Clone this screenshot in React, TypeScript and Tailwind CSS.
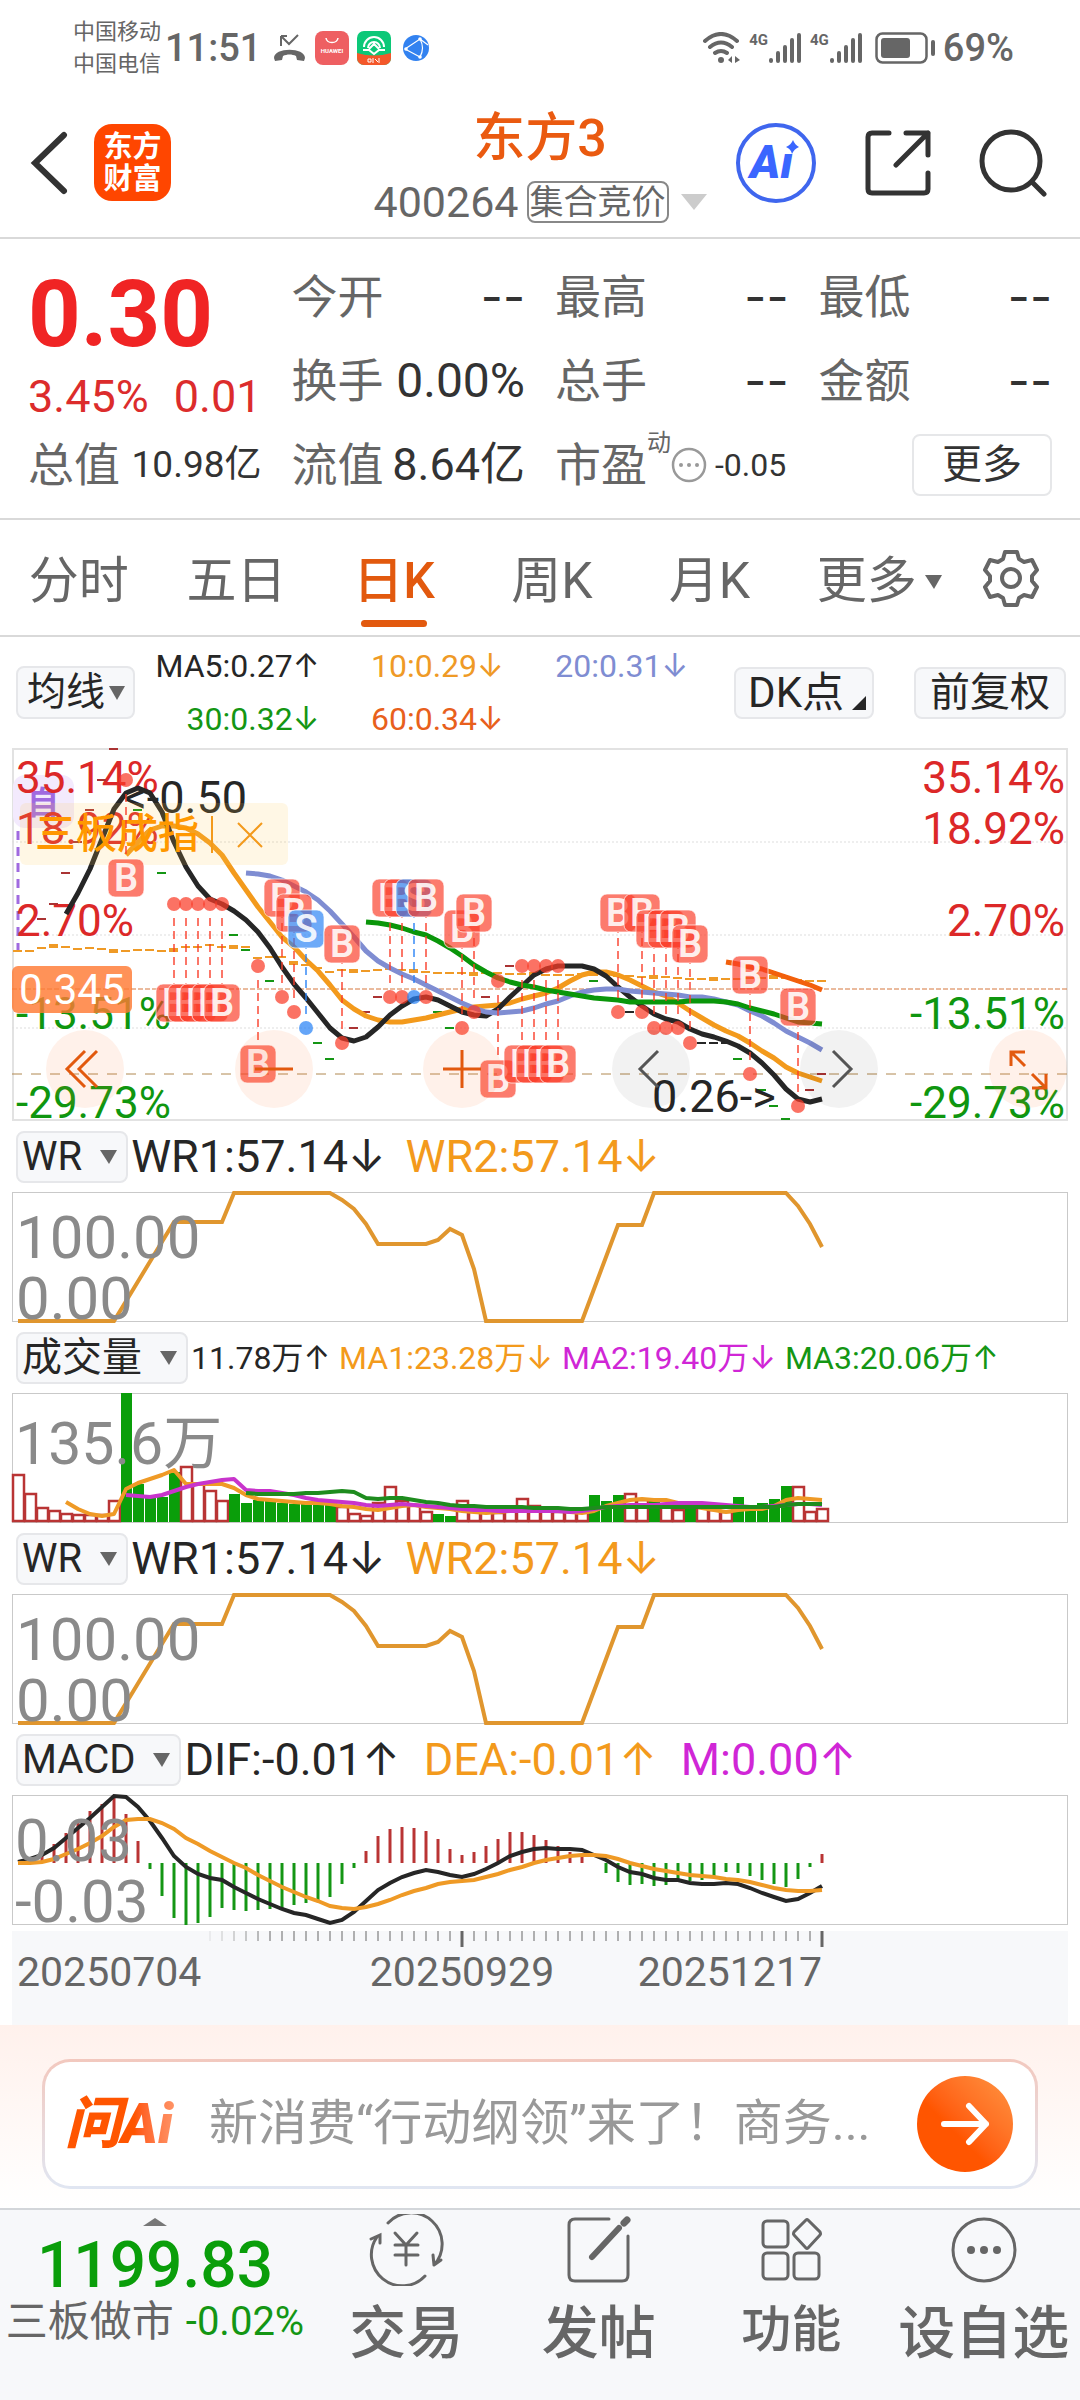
import type { ReactNode } from "react";

type Tone = "black" | "orange" | "purple" | "green";

const tones: Record<Tone, string> = {
  black: "text-[#262626]",
  orange: "text-[#f39a1c]",
  purple: "text-[#d026d6]",
  green: "text-[#149614]",
};

// Every trading day takes 12 units on the x axis
const dayX = (day: number) => 6 + day * 12;

const toPoints = (values: number[], start = 0) =>
  values.map((y, i) => `${dayX(start + i)},${y}`).join(" ");

// Moving averages of the price chart, one value per day from "start"
const averages = [
  {
    color: "#f39a1c",
    start: 9,
    values: [
      107, 94, 82, 78, 78, 80, 86, 95, 107, 125, 142, 159, 174, 189, 199, 212,
      223, 237, 252, 261, 268, 272, 274, 274, 272, 270, 267, 264, 261, 259, 258,
      257, 255, 251, 248, 245, 240, 233, 227, 224, 224, 227, 232, 238, 244, 248,
      255, 263, 270, 277, 283, 288, 295, 303, 310, 319, 325, 329, 333,
    ],
  },
  {
    color: "#262626",
    start: 4,
    values: [
      166, 145, 121, 91, 61, 45, 40, 45, 64, 94, 119, 138, 151, 156, 163, 172,
      184, 200, 219, 236, 250, 265, 280, 290, 293, 289, 279, 267, 258, 251, 249,
      252, 258, 264, 267, 268, 261, 249, 238, 227, 221, 218, 218, 218, 221, 228,
      239, 249, 258, 266, 271, 274, 281, 286, 289, 293, 298, 305, 315, 327, 341,
      351, 354, 351,
    ],
  },
  {
    color: "#7f8dd2",
    start: 19,
    values: [
      125, 126, 128, 132, 138, 144, 152, 163, 176, 189, 203, 213, 220, 226, 231,
      237, 243, 249, 255, 260, 264, 265, 264, 263, 260, 256, 253, 248, 244, 242,
      241, 241, 243, 244, 245, 246, 247, 249, 249, 251, 254, 257, 263, 268, 275,
      283, 289, 295, 302,
    ],
  },
  {
    color: "#0a960a",
    start: 29,
    values: [
      174, 175, 177, 180, 184, 187, 193, 200, 208, 217, 224, 230, 234, 237, 239,
      242, 244, 246, 248, 250, 251, 252, 254, 254, 254, 254, 254, 253, 253, 253,
      254, 256, 260, 263, 266, 270, 274, 275, 276,
    ],
  },
  {
    color: "#f2600c",
    start: 59,
    values: [214, 216, 219, 221, 225, 229, 233, 237, 242],
  },
];

// Overlay of the board index
const indexLine = [
  203, 203, 200, 198, 199, 201, 200, 201, 203, 203, 202, 202, 203, 202, 199,
  199, 197, 199, 199, 199, 210, 209, 209, 215, 217, 220, 224, 222, 223, 223,
  222, 221, 222, 223, 224, 225, 225, 225, 226, 225, 225, 226, 226, 226, 227,
  227, 227, 226, 226, 227, 228, 228, 229, 229, 229, 230, 231, 231, 231, 231,
  231, 230, 230, 229, 230, 232, 233, 233,
];

// Flat daily prices: [day, y, colour]
const prices: [number, number, string][] = [
  [2, 171, "#a33"], [3, 156, "#a33"], [4, 125, "#a33"], [5, 94, "#a33"],
  [6, 62, "#a33"], [7, 32, "#a33"], [8, 1, "#a33"], [28, 280, "#a33"],
  [29, 264, "#a33"], [30, 249, "#a33"], [39, 249, "#a33"], [41, 218, "#a33"],
  [66, 342, "#a33"], [67, 326, "#a33"], [10, 62, "#149614"],
  [12, 125, "#149614"], [18, 187, "#149614"], [19, 202, "#149614"],
  [21, 233, "#149614"], [25, 295, "#149614"], [26, 311, "#149614"],
  [35, 264, "#149614"], [36, 280, "#149614"], [48, 233, "#149614"],
  [60, 311, "#149614"], [62, 342, "#149614"], [63, 358, "#149614"],
  [64, 371, "#149614"], [51, 264, "#262626"], [57, 295, "#262626"],
  [58, 295, "#262626"], [59, 295, "#262626"],
];

// Buy and sell points: [day, price y, label y, letter]
const signals: [number, number, number, "B" | "S"][] = [
  [9, 32, 130, "B"],
  [13, 156, 255, "B"], [14, 156, 255, "B"], [15, 156, 255, "B"],
  [16, 156, 255, "B"], [17, 156, 255, "B"],
  [20, 218, 316, "B"], [22, 249, 150, "B"], [23, 264, 165, "B"],
  [24, 280, 181, "S"], [27, 295, 196, "B"], [31, 249, 150, "B"],
  [32, 249, 150, "B"], [33, 249, 150, "S"], [34, 249, 150, "B"],
  [37, 280, 181, "B"], [38, 264, 165, "B"], [40, 233, 331, "B"],
  [42, 218, 316, "B"], [43, 218, 316, "B"], [44, 218, 316, "B"],
  [45, 218, 316, "B"], [50, 264, 165, "B"], [52, 264, 165, "B"],
  [53, 280, 181, "B"], [54, 280, 181, "B"], [55, 280, 181, "B"],
  [56, 295, 196, "B"], [61, 326, 227, "B"], [65, 358, 259, "B"],
];

const scale = [
  { label: "35.14%", y: 45, color: "#dc2828" },
  { label: "18.92%", y: 96, color: "#dc2828" },
  { label: "2.70%", y: 188, color: "#dc2828" },
  { label: "-13.51%", y: 281, color: "#0f960f" },
  { label: "-29.73%", y: 370, color: "#0f960f" },
];

// Negative height means a falling day
const volumes = [
  47, 28, 14, 11, 8, 7, 7, 7, 21, -129, -38, -24, -25, -50, 55, 38, 31, 21, -28,
  -19, -22, -22, -19, -18, -19, -18, -17, 15, 8, 6, 19, 35, 21, 17, 10, -8, -6,
  21, 15, 11, 9, 12, 23, 16, 12, 10, 10, 10, -27, -21, -27, 28, 22, -22, 16, 12,
  -16, 14, 12, 10, -25, -17, -19, -23, -36, 35, 10, 13,
];

const volumeLines = [
  {
    color: "#ef9a26",
    start: 4,
    values: [
      109, 116, 121, 123, 121, 96, 90, 86, 82, 77, 91, 91, 91, 91, 95, 102, 106,
      107, 108, 109, 110, 110, 111, 113, 114, 116, 117, 115, 113, 112, 114, 115,
      116, 118, 119, 120, 119, 118, 115, 115, 116, 117, 119, 120, 118, 113, 110,
      107, 106, 107, 107, 110, 112, 115, 117, 119, 117, 116, 116, 113, 107, 105,
      106, 107,
    ],
  },
  {
    color: "#c834cc",
    start: 9,
    values: [
      102, 103, 104, 102, 98, 94, 91, 89, 87, 86, 97, 98, 98, 100, 102, 105, 107,
      108, 109, 110, 112, 113, 112, 111, 112, 113, 114, 115, 116, 117, 117, 118,
      118, 118, 118, 118, 118, 119, 118, 116, 114, 113, 112, 112, 112, 111, 110,
      110, 110, 111, 112, 113, 114, 114, 113, 112, 111, 111, 112,
    ],
  },
  {
    color: "#1e8c1e",
    start: 19,
    values: [
      100, 101, 101, 101, 101, 100, 100, 99, 98, 99, 105, 106, 105, 105, 107, 109,
      110, 112, 113, 113, 114, 114, 114, 114, 115, 115, 115, 116, 116, 115, 114,
      114, 114, 114, 114, 114, 114, 114, 114, 114, 114, 114, 114, 114, 114, 112,
      111, 111, 111,
    ],
  },
];

const macdBars = [
  0, 3, 9, 19, 30, 40, 52, 59, 67, 49, 22, -6, -33, -55, -62, -60, -54, -45,
  -47, -48, -47, -46, -45, -42, -40, -37, -34, -21, -5, 12, 27, 34, 36, 35, 32,
  24, 14, 8, 11, 17, 24, 31, 31, 28, 23, 17, 11, 9, 0, -10, -19, -22, -21, -23,
  -22, -19, -18, -17, -14, -9, -10, -13, -17, -21, -24, -16, -4, 9,
];

const dif = [
  67, 64, 60, 53, 43, 33, 23, 12, 1, 2, 12, 26, 43, 61, 72, 79, 83, 85, 92, 98,
  104, 109, 114, 118, 120, 124, 128, 125, 117, 106, 95, 88, 82, 78, 75, 77, 80,
  82, 79, 74, 68, 61, 57, 54, 53, 54, 54, 55, 60, 65, 72, 77, 79, 83, 85, 85,
  88, 89, 89, 88, 89, 93, 98, 102, 106, 104, 98, 91,
];

const dea = [
  68, 68, 67, 64, 59, 54, 48, 41, 32, 25, 24, 24, 28, 34, 43, 49, 56, 62, 68,
  73, 80, 86, 92, 97, 102, 106, 111, 113, 114, 112, 109, 105, 100, 96, 93, 89,
  87, 86, 85, 82, 79, 75, 72, 68, 65, 63, 61, 60, 60, 61, 64, 68, 71, 74, 76,
  78, 80, 81, 82, 84, 85, 87, 90, 93, 95, 96, 96, 95,
];

const wr: [number, number][] = [
  [0, 129], [8, 129], [13, 30], [17, 30], [18, 1], [26, 1], [27, 8], [28, 17],
  [29, 32], [30, 52], [34, 52], [35, 48], [36, 37], [37, 43], [38, 77],
  [39, 129], [47, 129], [50, 33], [52, 33], [53, 1], [64, 1], [65, 14],
  [66, 32], [67, 55],
];

const StatusBar = () => (
  <div className="flex h-24 items-center justify-between pr-[66px] pl-[73px] text-[#666]">
    <div className="flex items-center">
      <div className="text-[22px] leading-8">
        <p>中国移动</p>
        <p>中国电信</p>
      </div>
      <span className="ml-1 text-[38px] font-medium">11:51</span>
      <svg className="ml-3 h-[34px] w-[34px]" viewBox="0 0 34 34" fill="none">
        <path d="M8 5v10M8 5h6M9 6l7 7 9-9" stroke="#666" strokeWidth="2" />
        <path d="M1 27c0-11 31-11 31 0l-1 3-7-1-1-4c-4-2-9-2-13 0l-1 4-7 1z" fill="#666" />
      </svg>
      <svg className="ml-2 size-[34px]" viewBox="0 0 34 34">
        <rect width="34" height="34" rx="8" fill="#ee5f62" />
        <path d="M11 7c1 6 11 6 12 0" stroke="#fff" strokeWidth="1.5" fill="none" />
        <text x="17" y="22" textAnchor="middle" fontSize="6" fontWeight="700" fill="#fff">HUAWEI</text>
      </svg>
      <svg className="ml-2 size-[34px]" viewBox="0 0 34 34">
        <rect width="34" height="34" rx="7" fill="#0cc878" />
        <path d="M0 22q17 5 34 0v5a7 7 0 0 1-7 7H7a7 7 0 0 1-7-7z" fill="#f4572a" />
        <path d="M7 16a10 10 0 0 1 20 0M11 17a6 6 0 0 1 12 0M12 18l5-5 5 5M6 19h6l5 4 5-4h6" stroke="#fff" strokeWidth="2" fill="none" />
        <path d="M11 28h3v3h-3zM16 27v5M18 28l3 3M22 27v5" stroke="#fff" strokeWidth="1" fill="none" />
      </svg>
      <svg className="ml-3 size-[26px]" viewBox="0 0 26 26" fill="none">
        <circle cx="13" cy="13" r="13" fill="#3282f0" />
        <path d="M2 14 17 4q5 9 0 18M2 14l15 8M17 4l8 6" stroke="#fff" strokeWidth="1.2" />
        <circle cx="17" cy="4" r="1.8" fill="#fff" />
        <circle cx="3" cy="14" r="1.8" fill="#fff" />
        <circle cx="17" cy="22" r="1.8" fill="#fff" />
      </svg>
    </div>
    <div className="flex items-center">
      <svg className="h-8 w-[38px]" viewBox="0 0 38 32" fill="none" stroke="#666" strokeWidth="4" strokeLinecap="round">
        <path d="M2 9Q18-5 34 9M7 15q11-9 22 0M12 21q6-4 12 0" />
        <circle cx="18" cy="28" r="3" fill="#666" stroke="none" />
        <path d="M29 24v7l-4-3zM32 24v7l5-3z" fill="#666" stroke="none" />
      </svg>
      <Signal />
      <Signal />
      <svg className="ml-3 h-8 w-[60px]" viewBox="0 0 60 32" fill="none">
        <rect x="1.5" y="1.5" width="50" height="29" rx="6" stroke="#666" strokeWidth="2.5" />
        <rect x="6" y="6" width="29" height="20" rx="3" fill="#666" />
        <rect x="56" y="8" width="4" height="16" rx="2" fill="#666" />
      </svg>
      <span className="ml-2 text-[38px] font-medium">69%</span>
    </div>
  </div>
);

const Signal = () => (
  <div className="ml-2 flex h-8">
    <span className="text-[15px] leading-4 font-bold">4G</span>
    <svg className="h-8 w-[34px]" viewBox="0 0 34 32" stroke="#666" strokeWidth="4" strokeLinecap="round">
      <path d="M3 28v1M10 21v8M17 15v14M24 8v21M31 3v26" />
    </svg>
  </div>
);

const Header = () => (
  <header className="grid h-[143px] grid-cols-[1fr_auto_1fr] items-center border-b-2 border-[#d9d9d9] px-[30px] pb-2">
    <div className="flex items-center gap-[26px]">
      <button aria-label="返回">
        <svg className="h-16 w-[38px]" viewBox="0 0 38 64" fill="none" stroke="#333" strokeWidth="6" strokeLinecap="round">
          <path d="M34 4 5 32l29 28" />
        </svg>
      </button>
      <a href="#home" className="flex size-[77px] flex-col items-center justify-center rounded-[18px] bg-[#ff4600] text-[29px] leading-8 font-bold text-white">
        <span>东方</span>
        <span>财富</span>
      </a>
    </div>
    <div className="flex flex-col items-center gap-[10px] pt-1">
      <h1 className="text-[52px] leading-[64px] font-medium text-[#ea5a10]">东方3</h1>
      <button className="flex items-center text-[#666]">
        <span className="text-[43px] leading-[42px]">400264</span>
        <span className="ml-2 rounded-lg border-2 border-[#888] px-px text-[34px] leading-[38px]">集合竞价</span>
        <svg className="ml-3 h-4 w-[26px]" viewBox="0 0 26 16">
          <path d="M0 0h26L13 16z" fill="#ccc" />
        </svg>
      </button>
    </div>
    <div className="flex items-center justify-end gap-12 pr-[3px]">
      <button aria-label="Ai">
        <svg className="size-[82px]" viewBox="0 0 82 82">
          <circle cx="41" cy="41" r="38" fill="#fff" stroke="#3f66ee" strokeWidth="4" />
          <text x="15" y="56" fontSize="46" fontWeight="900" fontStyle="italic" fill="#3a66ff">Ai</text>
          <circle cx="57" cy="24" r="8" fill="#fff" />
          <path d="M58 18q2 5 6 7-5 2-7 7-1-5-6-7 5-2 7-7z" fill="#3a66ff" />
        </svg>
      </button>
      <button aria-label="分享">
        <svg className="h-[66px] w-[66px]" viewBox="0 0 66 66" fill="none" stroke="#333" strokeWidth="5" strokeLinecap="round" strokeLinejoin="round">
          <path d="M24 3H7Q3 3 3 7v52q0 4 4 4h52q4 0 4-4V43M41 3h22v22M63 3 31 35" />
        </svg>
      </button>
      <button aria-label="搜索">
        <svg className="h-[68px] w-[68px]" viewBox="0 0 68 68" fill="none" stroke="#333" strokeWidth="5" strokeLinecap="round">
          <circle cx="32" cy="32" r="29" />
          <path d="m53 53 12 12" />
        </svg>
      </button>
    </div>
  </header>
);

const Quote = ({ label, value }: { label: string; value: string }) => (
  <div className="flex items-center justify-between">
    <span className="text-[46px] text-[#666]">{label}</span>
    {value === "--" ? (
      <span className="font-['Inter'] text-[48px] text-[#333]">{value}</span>
    ) : (
      <span className="text-[48px] text-[#333]">{value}</span>
    )}
  </div>
);

const Quotes = () => (
  <section className="border-b-2 border-[#d9d9d9] px-7 pt-4 pb-[11px] whitespace-nowrap">
    <div className="grid auto-rows-[84px] grid-cols-4 gap-x-[30px]">
      <div className="row-span-2 flex flex-col justify-between pt-3 text-[#dc2c2c]">
        <p className="text-[92px] leading-[96px] font-bold text-[#f02424]">0.30</p>
        <p className="flex justify-between text-[45px] leading-[52px]">
          <span>3.45%</span>
          <span>0.01</span>
        </p>
      </div>
      <Quote label="今开" value="--" />
      <Quote label="最高" value="--" />
      <Quote label="最低" value="--" />
      <Quote label="换手" value="0.00%" />
      <Quote label="总手" value="--" />
      <Quote label="金额" value="--" />
      <div className="flex items-center justify-between">
        <span className="text-[46px] text-[#666]">总值</span>
        <span className="text-[37px] text-[#333]">10.98亿</span>
      </div>
      <div className="flex items-center justify-between">
        <span className="text-[46px] text-[#666]">流值</span>
        <span className="text-[45px] text-[#333]">8.64亿</span>
      </div>
      <div className="flex items-center">
        <span className="text-[46px] text-[#666]">市盈</span>
        <span className="self-start pt-[2px] text-[24px] text-[#666]">动</span>
        <svg className="size-9 shrink-0" viewBox="0 0 36 36" fill="#999">
          <circle cx="18" cy="18" r="16" fill="none" stroke="#999" strokeWidth="2.5" />
          <circle cx="10" cy="18" r="2" />
          <circle cx="18" cy="18" r="2" />
          <circle cx="26" cy="18" r="2" />
        </svg>
        <span className="ml-2 text-[32px] text-[#333]">-0.05</span>
      </div>
      <div className="flex items-center justify-end">
        <button className="h-[62px] rounded-lg border-2 border-[#e6e7e9] px-7 text-[40px] leading-[54px] text-[#333]">更多</button>
      </div>
    </div>
  </section>
);

const Tabs = () => (
  <nav className="flex h-[117px] items-center border-b-2 border-[#d9d9d9] pr-10 text-[50px] whitespace-nowrap text-[#666]">
    <div className="grid flex-1 grid-cols-6 justify-items-center pt-2">
      <button>分时</button>
      <button>五日</button>
      <button className="relative font-medium text-[#e2590e]">
        日K
        <span className="absolute inset-x-2 -bottom-2 h-[7px] rounded-full bg-[#e2590e]" />
      </button>
      <button>周K</button>
      <button>月K</button>
      <button className="flex items-center gap-2 pl-6">
        更多
        <svg className="h-[14px] w-[17px]" viewBox="0 0 17 14">
          <path d="M0 0h17L9 14z" fill="#666" />
        </svg>
      </button>
    </div>
    <button aria-label="设置" className="ml-9">
      <svg className="size-[58px]" viewBox="0 0 58 58" fill="none" stroke="#666" strokeWidth="4" strokeLinejoin="round">
        <path d="M23 3h12l2 7 5 3 8-2 5 10-5 6v5l5 6-5 10-8-2-5 3-2 7H23l-2-7-5-3-8 2-5-10 5-6v-5l-5-6 5-10 8 2 5-3z" />
        <circle cx="29" cy="29" r="9" />
      </svg>
    </button>
  </nav>
);

const Averages = () => (
  <section className="flex h-[111px] items-center justify-between pr-[14px] pl-4 whitespace-nowrap">
    <button className="flex h-[53px] items-center rounded-lg border-2 border-[#e6e7ea] bg-[#f7f8fa] pr-2 pl-[9px] text-[39px] text-[#262626]">
      均线
      <svg className="ml-1 h-[14px] w-4" viewBox="0 0 16 14">
        <path d="M0 0h16L8 14z" fill="#666" />
      </svg>
    </button>
    <div className="mr-[46px] grid flex-1 grid-cols-3 text-right text-[32px] leading-[53px]">
      <span className="text-[#262626]">MA5:0.27↑</span>
      <span className="text-[#ef9a26]">10:0.29↓</span>
      <span className="text-[#7f8dd2]">20:0.31↓</span>
      <span className="text-[#149614]">30:0.32↓</span>
      <span className="text-[#e8601c]">60:0.34↓</span>
    </div>
    <button className="mr-10 flex h-[52px] items-center rounded-lg border-2 border-[#e6e7ea] bg-[#f7f8fa] pr-[6px] pl-3 text-[42px] text-[#262626]">
      DK点
      <svg className="mt-5 ml-2 size-[14px]" viewBox="0 0 14 14">
        <path d="M14 0v14H0z" fill="#262626" />
      </svg>
    </button>
    <button className="h-[52px] rounded-lg border-2 border-[#e6e7ea] bg-[#f7f8fa] px-[14px] text-[40px] leading-[44px] text-[#262626]">
      前复权
    </button>
  </section>
);

const PriceChart = () => (
  <div className="relative mx-3">
    <svg className="block h-auto w-full overflow-visible" viewBox="0 0 1056 373" fill="none">
      <rect x="1" y="1" width="1054" height="371" stroke="#e2e2e2" strokeWidth="2" />
      {[94, 187, 280].map((y) => (
        <path key={y} d={`M0 ${y}h1056`} stroke="#ddd" strokeDasharray="2 2" />
      ))}
      <rect x="1" y="27" width="61" height="53" rx="12" fill="#f3eafd" />
      <text x="15" y="66" fontSize="32" fontWeight="700" fill="#a06ae0">自</text>
      <path d="M6 83v120" stroke="#a06ae0" strokeWidth="3" strokeDasharray="9 7" />

      <path d="M0 241h1056" stroke="#d5763c" strokeWidth="1" strokeDasharray="5 2" />
      <path d="M0 326h1056" stroke="#b08850" strokeWidth="1" strokeDasharray="10 9" />

      {scale.map((s) => (
        <g key={s.label} fontSize="44" fill={s.color}>
          <text x="4" y={s.y}>{s.label}</text>
          <text x="1053" y={s.y} textAnchor="end">{s.label}</text>
        </g>
      ))}

      {indexLine.map((y, day) => (
        <path
          key={day}
          d={`M${dayX(day) - 5} ${y}h9`}
          stroke="#ef9a26"
          strokeWidth={day % 5 === 3 ? 4 : 2}
        />
      ))}
      {prices.map(([day, y, color]) => (
        <path key={day} d={`M${dayX(day) - 5} ${y}h9`} stroke={color} strokeWidth="2" />
      ))}
      {averages.map((line) => (
        <polyline
          key={line.color}
          points={toPoints(line.values, line.start)}
          stroke={line.color}
          strokeWidth="5"
          strokeLinejoin="round"
        />
      ))}

      <text x="112" y="65" fontSize="45" fill="#262626">{"<-0.50"}</text>

      <rect x="8" y="55" width="268" height="62" rx="6" fill="#ffc850" fillOpacity="0.15" />
      <text x="23" y="100" fontSize="41" fontWeight="500" fill="#ff9800">三板成指</text>
      <path d="M200 68v37M226 75l24 24M250 75l-24 24" stroke="#f39a1c" strokeWidth="2" />

      {signals.map(([day, price, label, letter]) => {
        const x = dayX(day);
        const color = letter === "B" ? "#fa3c28" : "#2882f5";
        const dir = label > price ? 1 : -1;
        return (
          <g key={day}>
            <path
              d={`M${x} ${price + dir * 14}V${label - dir * 19}`}
              stroke={color}
              strokeOpacity="0.7"
              strokeWidth="2"
              strokeDasharray="8 5"
            />
            <circle cx={x} cy={price} r="7" fill={color} fillOpacity="0.72" />
            <rect x={x - 18} y={label - 19} width="36" height="38" rx="7" fill={color} fillOpacity="0.68" stroke="#fff" strokeOpacity="0.7" />
            <text x={x} y={label + 13} textAnchor="middle" fontSize="38" fontWeight="600" fill="#fff" fillOpacity="0.9">
              {letter}
            </text>
          </g>
        );
      })}

      <rect x="0" y="218" width="120" height="47" rx="6" fill="#ff7a33" fillOpacity="0.82" />
      <text x="7" y="256" fontSize="42" fill="#fff">0.345</text>
      <text x="640" y="364" fontSize="45" fill="#262626">{"0.26->"}</text>
    </svg>

    {/* Chart controls */}
    <div className="absolute right-px bottom-[13px] left-[34px] flex justify-between">
      <ChartButton label="最早">
        <path d="M39 21 21 39l18 18M51 21 33 39l18 18" />
      </ChartButton>
      <ChartButton label="缩小">
        <path d="M20 39h38" />
      </ChartButton>
      <ChartButton label="放大">
        <path d="M20 39h38M39 20v38" />
      </ChartButton>
      <ChartButton label="前移" grey>
        <path d="M46 21 28 39l18 18" />
      </ChartButton>
      <ChartButton label="后移" grey>
        <path d="m33 21 18 18-18 18" />
      </ChartButton>
      <ChartButton label="全屏">
        <path d="M36 22H22v14M22 22l14 14M57 44v14H43M57 58 43 44" />
      </ChartButton>
    </div>
  </div>
);

const ChartButton = ({
  label,
  grey,
  children,
}: {
  label: string;
  grey?: boolean;
  children: ReactNode;
}) => (
  <button
    aria-label={label}
    className={`size-[78px] rounded-full ${
      grey ? "bg-black/5 text-[#555]" : "bg-[#ff7a33]/10 text-[#e2590e]"
    }`}
  >
    <svg className="size-[78px]" viewBox="0 0 78 78" fill="none" stroke="currentColor" strokeWidth="3">
      {children}
    </svg>
  </button>
);

const IndicatorHead = ({
  name,
  children,
}: {
  name: string;
  children: ReactNode;
}) => (
  <div className="flex h-[71px] items-center gap-[3px] pr-3 pl-4 whitespace-nowrap">
    <button className="flex h-[52px] items-center gap-[18px] rounded-lg border-2 border-[#e6e7ea] bg-[#f7f8fa] pr-[9px] pl-1 text-[40px] text-[#262626]">
      {name}
      <svg className="h-[14px] w-[17px]" viewBox="0 0 17 14">
        <path d="M0 0h17L9 14z" fill="#666" />
      </svg>
    </button>
    {children}
  </div>
);

const Reading = ({ tone, text }: { tone: Tone; text: string }) => (
  <span className={`text-[45px] ${tones[tone]}`}>{text}</span>
);

const Frame = ({ children }: { children: ReactNode }) => (
  <div className="px-3">
    <svg className="block h-auto w-full overflow-visible" viewBox="0 0 1056 130" fill="none">
      <rect x="0.5" y="0.5" width="1055" height="129" stroke="#c9c9c9" />
      {children}
    </svg>
  </div>
);

const WrPanel = () => (
  <section>
    <IndicatorHead name="WR">
      <div className="flex gap-5">
        <Reading tone="black" text="WR1:57.14↓" />
        <Reading tone="orange" text="WR2:57.14↓" />
      </div>
    </IndicatorHead>
    <Frame>
      <polyline
        points={wr.map(([day, y]) => `${dayX(day)},${y}`).join(" ")}
        stroke="#e0962e"
        strokeWidth="4"
      />
      <text x="4" y="66" fontSize="60" fill="#8a8a8a">100.00</text>
      <text x="4" y="127" fontSize="60" fill="#8a8a8a">0.00</text>
    </Frame>
  </section>
);

const VolumePanel = () => (
  <section>
    <IndicatorHead name="成交量">
      <div className="flex gap-[9px] text-[32px]">
        <span className={tones.black}>11.78万↑</span>
        <span className={tones.orange}>MA1:23.28万↓</span>
        <span className={tones.purple}>MA2:19.40万↓</span>
        <span className={tones.green}>MA3:20.06万↑</span>
      </div>
    </IndicatorHead>
    <Frame>
      {volumes.map((v, day) =>
        v < 0 ? (
          <rect key={day} x={dayX(day) - 5} y={129 + v} width="11" height={-v} fill="#0a9e0a" />
        ) : (
          <rect key={day} x={dayX(day) - 5} y={129 - v} width="11" height={v - 1} stroke="#b93434" strokeWidth="2.5" />
        ),
      )}
      {volumeLines.map((line) => (
        <polyline
          key={line.color}
          points={toPoints(line.values, line.start)}
          stroke={line.color}
          strokeWidth="4"
          strokeLinejoin="round"
        />
      ))}
      <text x="3" y="71" fontSize="59" fill="#8a8a8a">135.6万</text>
    </Frame>
  </section>
);

const MacdPanel = () => (
  <section>
    <IndicatorHead name="MACD">
      <div className="flex gap-6">
        <Reading tone="black" text="DIF:-0.01↑" />
        <Reading tone="orange" text="DEA:-0.01↑" />
        <Reading tone="purple" text="M:0.00↑" />
      </div>
    </IndicatorHead>
    <Frame>
      {macdBars.map((v, day) => (
        <path
          key={day}
          d={`M${dayX(day)} 68v${-v}`}
          stroke={v > 0 ? "#b93434" : "#149614"}
          strokeWidth="3"
        />
      ))}
      <polyline points={toPoints(dif)} stroke="#262626" strokeWidth="4" />
      <polyline points={toPoints(dea)} stroke="#ef9a26" strokeWidth="4" />
      <text x="3" y="66" fontSize="60" fill="#8a8a8a">0.03</text>
      <text x="3" y="127" fontSize="60" fill="#8a8a8a">-0.03</text>
    </Frame>
  </section>
);

const ticks = Array.from({ length: 52 }, (_, i) => i + 16);

const DateAxis = () => (
  <div className="px-3 pt-[6px]">
    <svg className="block h-auto w-full bg-[#f7f8fa]" viewBox="0 0 1056 94">
      {ticks.map((day) => (
        <path
          key={day}
          d={`M${dayX(day)} 0v${day === 37 || day === 67 ? 16 : 10}`}
          stroke="#666"
          strokeOpacity={Math.min(1, (day - 15) / 6)}
          strokeWidth={day === 37 || day === 67 ? 3 : 1}
        />
      ))}
      <g fontSize="41" fill="#666">
        <text x="5" y="55">20250704</text>
        <text x="450" y="55" textAnchor="middle">20250929</text>
        <text x="810" y="55" textAnchor="end">20251217</text>
      </g>
    </svg>
  </div>
);

const AskBar = () => (
  <section className="bg-linear-to-b from-[#fff1ec] to-white px-[42px] pt-[34px] pb-[19px]">
    <div className="rounded-[28px] bg-linear-to-b from-[#f2c8be] to-[#e0e6f2] p-[3px]">
      <form className="flex h-[124px] items-center rounded-[25px] bg-white pr-[22px] pl-5">
        <span className="bg-linear-to-r from-[#ff5500] from-60% to-[#ff9c70] bg-clip-text pr-2 text-[56px] font-black text-transparent italic">
          问Ai
        </span>
        <input
          aria-label="问Ai"
          placeholder="新消费“行动纲领”来了！商务..."
          className="ml-7 min-w-0 flex-1 text-[49px] text-[#333] outline-none placeholder:text-[#999]"
        />
        <button
          type="button"
          aria-label="发送"
          className="flex size-24 shrink-0 items-center justify-center rounded-full bg-linear-to-tr from-[#ff5500] from-40% to-[#ff9440]"
        >
          <svg className="size-[50px]" viewBox="0 0 50 50" fill="none" stroke="#fff" strokeWidth="6" strokeLinecap="round" strokeLinejoin="round">
            <path d="M4 25h42M29 7l17 18-17 18" />
          </svg>
        </button>
      </form>
    </div>
  </section>
);

const NavItem = ({
  label,
  small,
  children,
}: {
  label: string;
  small?: boolean;
  children: ReactNode;
}) => (
  <a href="#nav" className="flex min-w-0 flex-1 flex-col items-center">
    <svg className="h-[72px] w-[76px]" viewBox="0 0 76 72" fill="none" stroke="#666" strokeWidth="3" strokeLinecap="round">
      {children}
    </svg>
    <span
      className={`mt-2 font-medium ${
        small ? "text-[50px] leading-[72px]" : "text-[57px] leading-[80px]"
      }`}
    >
      {label}
    </span>
  </a>
);

const BottomNav = () => (
  <footer className="flex h-[193px] border-t-2 border-[#d3d6da] bg-[#f7f8fa] pt-1 whitespace-nowrap text-[#666]">
    <a href="#index" className="flex w-[310px] shrink-0 flex-col items-center">
      <svg className="mt-1 h-2 w-6" viewBox="0 0 24 8">
        <path d="M12 0 24 8H0z" fill="#777" />
      </svg>
      <span className="mt-1 text-[64px] leading-[72px] font-medium text-[#0a9e0a]">1199.83</span>
      <span className="flex items-center gap-3 text-[42px] leading-[40px]">
        三板做市
        <span className="text-[40px]/[40px] text-[#149614]">-0.02%</span>
      </span>
    </a>
    <NavItem label="交易">
      <path d="M20 9a31 31 0 0 1 46 42M66 51l-1-10M66 51l7-5M57 62A31 31 0 0 1 9 23M3 25l9-4 0 8" />
      <path d="m27 19 11 12 11-12M38 31v20M27 31h23M27 41h23" />
    </NavItem>
    <NavItem label="发帖">
      <path d="M48 5H14q-6 0-6 6v50q0 6 6 6h47q6 0 6-6V22" />
      <path d="M31 43 58 14" strokeWidth="6" />
      <path d="m63 9 3-3" strokeWidth="7" />
    </NavItem>
    <NavItem label="功能" small>
      <rect x="10" y="7" width="25" height="26" rx="4" />
      <rect x="10" y="39" width="25" height="26" rx="4" />
      <rect x="41" y="39" width="25" height="26" rx="4" />
      <path d="M53 6q1-1 2 0l12 12q1 2 0 3L55 34q-1 1-2 0L41 21q-1-1 0-3z" />
    </NavItem>
    <NavItem label="设自选">
      <circle cx="38" cy="36" r="31" />
      <g fill="#666" stroke="none">
        <circle cx="25" cy="36" r="4" />
        <circle cx="38" cy="36" r="4" />
        <circle cx="51" cy="36" r="4" />
      </g>
    </NavItem>
  </footer>
);

const App = () => {
  return (
    <main className="w-full bg-white font-['Roboto','Inter','Noto_Sans_CJK_SC',sans-serif]">
      <StatusBar />
      <Header />
      <Quotes />
      <Tabs />
      <Averages />
      <PriceChart />
      <WrPanel />
      <VolumePanel />
      <WrPanel />
      <MacdPanel />
      <DateAxis />
      <AskBar />
      <BottomNav />
    </main>
  );
};

export default App;
